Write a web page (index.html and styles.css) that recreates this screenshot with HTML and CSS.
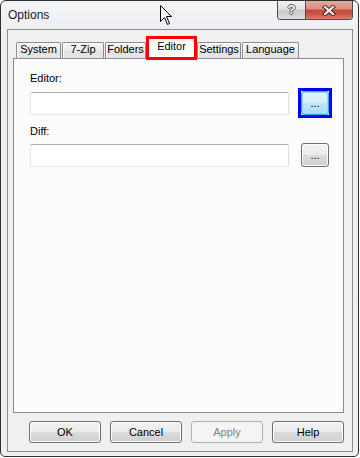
FILE: index.html
```html
<!DOCTYPE html>
<html>
<head>
<meta charset="utf-8">
<link rel="stylesheet" href="styles.css">
</head>
<body>
<div class="window">
  <div class="titlebar">
    <span class="title">Options</span>
    <div class="caption-btns">
      <div class="cap-help">?</div>
      <div class="cap-close">
        <svg class="close-x" width="14" height="11" viewBox="0 0 14 11">
          <path d="M3 2 L11 9 M11 2 L3 9" stroke="#4a2a26" stroke-width="4" stroke-linecap="square" fill="none"/>
          <path d="M3 2 L11 9 M11 2 L3 9" stroke="#ffffff" stroke-width="2" stroke-linecap="square" fill="none"/>
        </svg>
      </div>
    </div>
  </div>
  <div class="client">
    <div class="tabctl">
      <div class="tabs">
        <div class="tab tab-system">System</div>
        <div class="tab tab-7zip">7-Zip</div>
        <div class="tab tab-folders">Folders</div>
        <div class="tab tab-selected">Editor</div>
        <div class="tab tab-settings">Settings</div>
        <div class="tab tab-language">Language</div>
      </div>
      <div class="panel">
        <div class="label">Editor:</div>
        <div class="row">
          <div class="textbox"></div>
          <span class="focus-ring"><button class="btn browse-focused">...</button></span>
        </div>
        <div class="label label-diff">Diff:</div>
        <div class="row row-diff">
          <div class="textbox"></div>
          <button class="btn browse">...</button>
        </div>
      </div>
    </div>
    <div class="dialog-buttons">
      <button class="btn dlg">OK</button>
      <button class="btn dlg">Cancel</button>
      <button class="btn dlg btn-disabled">Apply</button>
      <button class="btn dlg">Help</button>
    </div>
  </div>
</div>
<svg class="cursor" width="13" height="21" viewBox="0 0 13 21">
  <path d="M0.5 0.5 L0.5 16.5 L4.5 12.5 L7.5 19.5 L9.5 18.5 L6.5 11.5 L11.5 11.5 Z" fill="#ffffff" stroke="#000000" stroke-width="1" stroke-linejoin="miter"/>
</svg>
</body>
</html>
```

FILE: styles.css
```css
body {
  margin: 0;
  background: #ffffff;
  font-family: "Liberation Sans", Arial, sans-serif;
  font-size: 11px;
  color: #000000;
}

.window {
  width: 359px;
  height: 457px;
  box-sizing: border-box;
  border: 1px solid #2f2f2f;
  border-radius: 6px 6px 5px 5px;
  background: linear-gradient(#f5f6f8, #eceef1 28px, #eeeff1);
  display: flex;
  flex-direction: column;
  overflow: hidden;
}

.titlebar {
  height: 28px;
  flex: none;
  display: flex;
  align-items: flex-start;
}

.title {
  font-size: 12px;
  line-height: 14px;
  margin: 7px 0 0 7px;
  color: #1a1a1a;
}

.caption-btns {
  margin-left: auto;
  margin-right: 5px;
  display: flex;
  height: 18px;
  border: 1px solid #4b4b4b;
  border-top: none;
  border-radius: 0 0 4px 4px;
  overflow: hidden;
}

.cap-help {
  width: 27px;
  border-right: 1px solid #4b4b4b;
  background: linear-gradient(#f2f2f2, #e2e2e2 45%, #cbcbcb 50%, #d2d2d2 80%, #e0e0e0);
  color: #ffffff;
  font-weight: bold;
  font-size: 13px;
  line-height: 18px;
  text-align: center;
  text-shadow: 1px 0 #5a5a5a, -1px 0 #5a5a5a, 0 1px #5a5a5a, 0 -1px #5a5a5a;
}

.cap-close {
  width: 46px;
  background: linear-gradient(#e6a99c, #d98c7d 45%, #c4493a 50%, #cb5647 75%, #df8270);
  display: flex;
  align-items: center;
  justify-content: center;
}

.close-x {
  display: block;
}

.client {
  flex: 1;
  margin: 0 5px 4px 6px;
  border: 1px solid #8b8b8b;
  background: #f0f0f0;
  display: flex;
  flex-direction: column;
}

.tabctl {
  flex: 1;
  display: flex;
  flex-direction: column;
  margin: 6px 8px 0 5px;
}

.tabs {
  display: flex;
  align-items: flex-end;
  padding-left: 3px;
  height: 22px;
}

.tab {
  box-sizing: border-box;
  height: 16px;
  border: 1px solid #898c95;
  border-bottom: none;
  border-radius: 2px 2px 0 0;
  background: linear-gradient(#f4f4f4, #ececec 50%, #e2e2e2 51%, #e6e6e6);
  box-shadow: inset 1px 1px 0 #ffffff;
  text-align: center;
  line-height: 13px;
  margin-right: 1px;
  white-space: nowrap;
}

.tab-system { width: 45px; }
.tab-7zip { width: 42px; }
.tab-folders { width: 41px; margin-right: 0; }
.tab-settings { width: 44px; }
.tab-language { width: 57px; }

.tab-selected {
  width: 51px;
  height: 24px;
  margin-right: 0;
  margin-bottom: -2px;
  border: 3px solid #ff0000;
  border-radius: 0;
  background: #ffffff;
  box-shadow: none;
  line-height: 15px;
  position: relative;
}

.panel {
  flex: 1;
  border: 1px solid #898c95;
  background: #fcfcfc;
  padding: 13px 0 0 16px;
}

.label {
  line-height: 13px;
}

.label-diff {
  margin-top: 10px;
}

.row {
  display: flex;
  align-items: flex-end;
  margin-top: 6px;
}

.row-diff {
  margin-top: 5px;
}

.textbox {
  width: 259px;
  height: 23px;
  box-sizing: border-box;
  border: 1px solid;
  border-color: #abadb3 #dbdfe6 #e3e9ef #e2e3ea;
  border-radius: 2px;
  background: #ffffff;
}

.btn {
  box-sizing: border-box;
  border: 1px solid #707070;
  border-radius: 3px;
  background: linear-gradient(#f2f2f2, #ebebeb 50%, #dddddd 51%, #cfcfcf);
  box-shadow: inset 0 0 0 1px #fbfbfb;
  font-family: inherit;
  font-size: 11px;
  color: #000000;
  padding: 0;
  margin: 0;
}

.browse {
  margin-left: 12px;
  width: 28px;
  height: 24px;
  line-height: 14px;
}

.focus-ring {
  display: flex;
  border: 3px solid #0000ff;
  margin: -3px 0 -3px 9px;
}

.browse-focused {
  width: 28px;
  height: 24px;
  line-height: 14px;
  border-color: #2aaee8;
  background: linear-gradient(#e6f6fd, #d3effc 50%, #bfe6f8 51%, #a9dcf3);
  box-shadow: inset 0 0 0 1px #8fdcfa;
}

.dialog-buttons {
  display: flex;
  gap: 9px;
  padding: 8px 0 8px 21px;
}

.dlg {
  width: 72px;
  height: 22px;
}

.btn-disabled {
  border-color: #adb2b5;
  background: #f4f4f4;
  box-shadow: none;
  color: #838383;
}

.cursor {
  position: absolute;
  left: 160px;
  top: 5px;
}
```
